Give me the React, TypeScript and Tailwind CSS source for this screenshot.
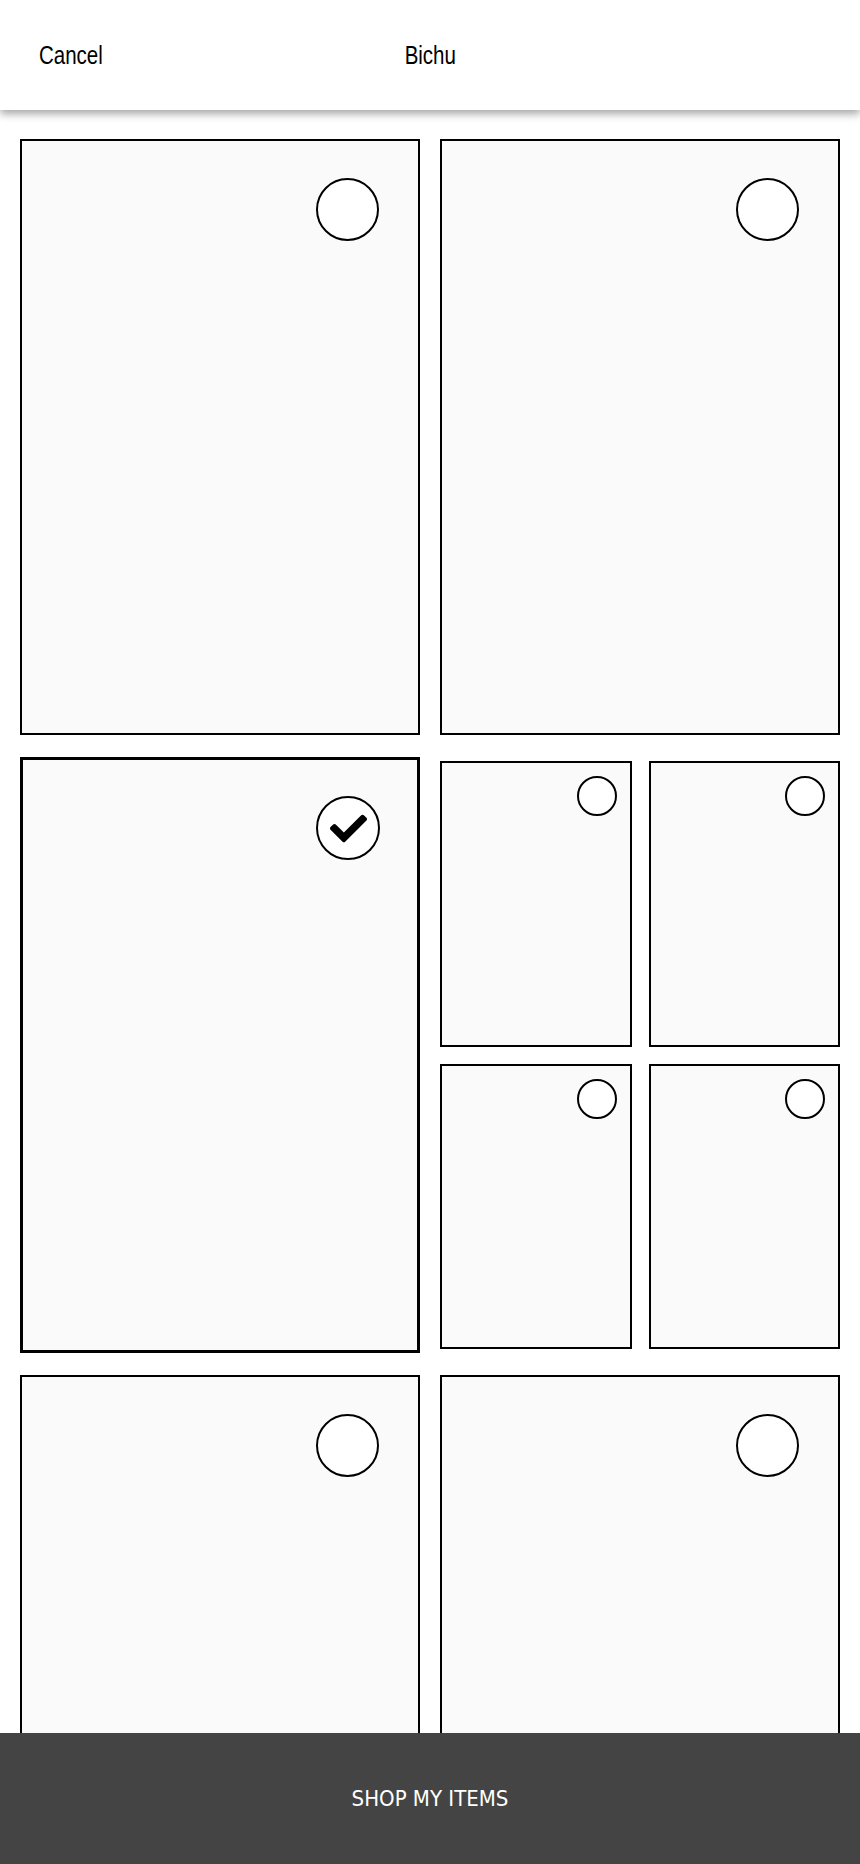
import React from "react";

const narrow = { fontFamily: '"Liberation Sans", Arial, sans-serif' };

function CheckMark() {
  return (
    <svg viewBox="0 64 512 384" width={37} height={29} aria-hidden="true" fill="black">
      <path d="M173.898 439.404l-166.4-166.4c-9.997-9.997-9.997-26.206 0-36.204l36.203-36.204c9.997-9.998 26.207-9.998 36.204 0L192 312.69 432.095 72.596c9.997-9.997 26.207-9.997 36.204 0l36.203 36.204c9.997 9.997 9.997 26.206 0 36.204l-294.4 294.401c-9.998 9.997-26.207 9.997-36.204-.001z" />
    </svg>
  );
}

function BigCard({ selected = false }: { selected?: boolean }) {
  return (
    <div
      className={
        selected
          ? "relative h-[596px] border-[3px] border-black bg-[#fafafa]"
          : "relative h-[596px] border-2 border-black bg-[#fafafa]"
      }
    >
      <div
        className={
          selected
            ? "absolute top-[36px] right-[37px] w-[64px] h-[64px] rounded-full border-2 border-black bg-white flex items-center justify-center"
            : "absolute top-[37px] right-[39px] w-[63px] h-[63px] rounded-full border-2 border-black bg-white"
        }
      >
        {selected && <CheckMark />}
      </div>
    </div>
  );
}

function SmallCard() {
  return (
    <div className="relative border-2 border-black bg-[#fafafa]">
      <div className="absolute top-[13px] right-[13px] w-[40px] h-[40px] rounded-full border-2 border-black bg-white" />
    </div>
  );
}

export default function App() {
  return (
    <div className="min-h-screen bg-white">
      {/* Header */}
      <header className="relative z-10 h-[110px] bg-white shadow-[0_4px_8px_rgba(0,0,0,0.35)] grid grid-cols-[1fr_auto_1fr] items-center">
        <button className="justify-self-start pl-[39px] text-[25px] text-black leading-none">
          <span className="inline-block scale-x-[0.82] origin-left" style={narrow}>
            Cancel
          </span>
        </button>
        <h1 className="text-[25px] font-normal text-black leading-none">
          <span className="inline-block scale-x-[0.82] origin-center" style={narrow}>
            Bichu
          </span>
        </h1>
        <div />
      </header>

      {/* Items */}
      <main className="px-5 pt-[29px] pb-[150px] flex flex-col gap-[22px]">
        <div className="grid grid-cols-2 gap-5">
          <BigCard />
          <BigCard />
        </div>
        <div className="grid grid-cols-2 gap-5">
          <BigCard selected />
          <div className="grid grid-cols-2 grid-rows-2 gap-[17px] py-1 h-[596px]">
            <SmallCard />
            <SmallCard />
            <SmallCard />
            <SmallCard />
          </div>
        </div>
        <div className="grid grid-cols-2 gap-5">
          <BigCard />
          <BigCard />
        </div>
      </main>

      {/* Bottom action */}
      <div className="fixed bottom-0 inset-x-0 z-20 h-[131px] bg-[#444444] flex items-center justify-center">
        <span
          className="text-white text-[22px]"
          style={{ fontFamily: '"DejaVu Sans Condensed", "DejaVu Sans", sans-serif' }}
        >
          SHOP MY ITEMS
        </span>
      </div>
    </div>
  );
}
